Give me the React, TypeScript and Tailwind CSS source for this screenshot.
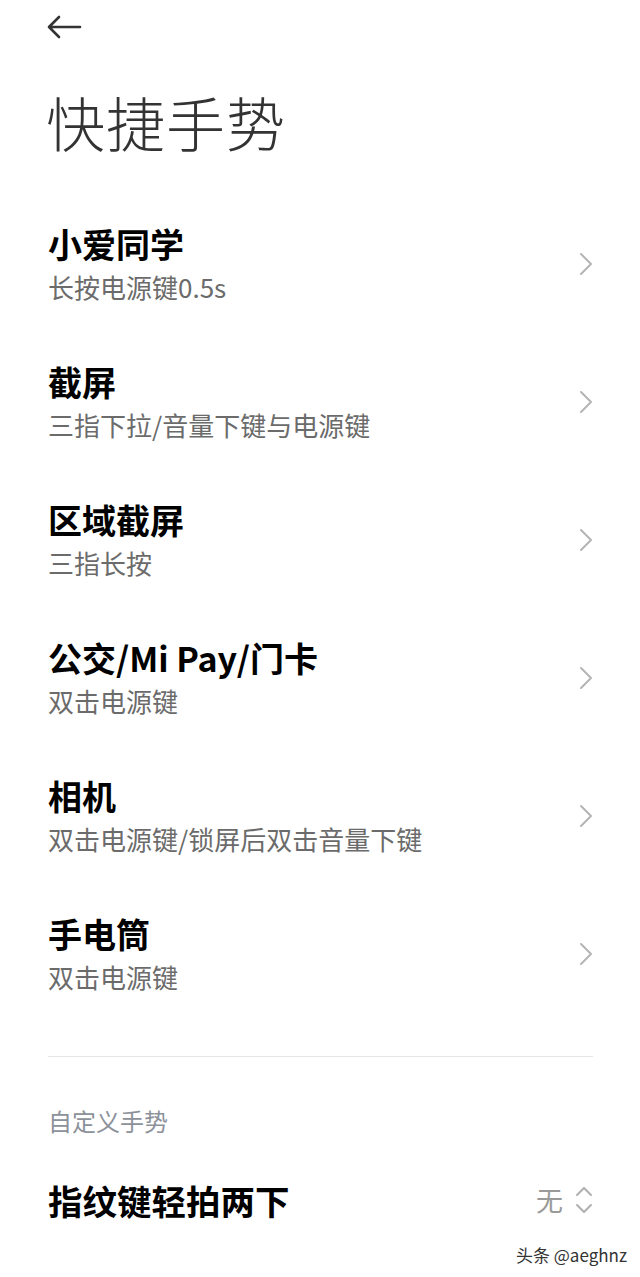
const font = { fontFamily: '"Noto Sans CJK SC", "Noto Sans", sans-serif' };

const items = [
    { title: '小爱同学', sub: '长按电源键0.5s' },
    { title: '截屏', sub: '三指下拉/音量下键与电源键' },
    { title: '区域截屏', sub: '三指长按' },
    { title: '公交/Mi Pay/门卡', sub: '双击电源键' },
    { title: '相机', sub: '双击电源键/锁屏后双击音量下键' },
    { title: '手电筒', sub: '双击电源键' },
];

const Chevron = () => (
    <svg width="14" height="24" viewBox="0 0 14 24" fill="none" className="shrink-0 mt-[30px]">
        <path d="M2 2 L12 12 L2 22" stroke="#b5b5b5" strokeWidth="2" strokeLinecap="round" strokeLinejoin="round" />
    </svg>
);

const App = () => {
    return (
        <div className="relative w-[640px] h-[1277px] bg-white overflow-hidden" style={font}>
            {/* header */}
            <div className="h-[54px] pl-[46px] flex items-center">
                <svg width="36" height="24" viewBox="0 0 36 24" fill="none">
                    <path d="M34 12 H3 M13 2 L3 12 L13 22" stroke="#333" strokeWidth="2.6" strokeLinecap="round" strokeLinejoin="round" />
                </svg>
            </div>
            <h1 className="mt-[32px] pl-[46px] h-[72px] leading-[72px] text-[59px] font-light text-[#333] tracking-[1px]">快捷手势</h1>

            <div className="mt-[38px] pl-[48px] pr-[47px]">
                {items.map((item) => (
                    <div key={item.title} className="h-[138px] flex items-center justify-between">
                        <div>
                            <div className="h-[44px] leading-[44px] text-[34px] font-bold text-black">{item.title}</div>
                            <div className="h-[42px] leading-[42px] text-[26px] text-[#6b6b6b]">{item.sub}</div>
                        </div>
                        <div className="self-stretch flex flex-col justify-center">
                            <div className="h-[86px] flex items-start">
                                <Chevron />
                            </div>
                        </div>
                    </div>
                ))}

                <div className="mt-[32px] h-px bg-[#e6e6e6]" />

                <div className="mt-[46px] h-[36px] leading-[36px] text-[24px] text-[#8c919a]">自定义手势</div>

                <div className="mt-[39px] h-[44px] flex items-center justify-between">
                    <div className="leading-[44px] text-[34.5px] font-bold text-black">指纹键轻拍两下</div>
                    <div className="flex items-center gap-[12px]">
                        <span className="text-[27px] text-[#9a9a9a] leading-[44px]">无</span>
                        <svg width="18" height="28" viewBox="0 0 18 28" fill="none">
                            <path d="M2 9 L9 2 L16 9 M2 19 L9 26 L16 19" stroke="#b0b0b0" strokeWidth="2" strokeLinecap="round" strokeLinejoin="round" />
                        </svg>
                    </div>
                </div>
            </div>

            {/* watermark */}
            <div className="absolute right-[13px] bottom-[14px] text-[17px] text-[#333] leading-none">头条 @aeghnz</div>
        </div>
    );
};

export default App;
